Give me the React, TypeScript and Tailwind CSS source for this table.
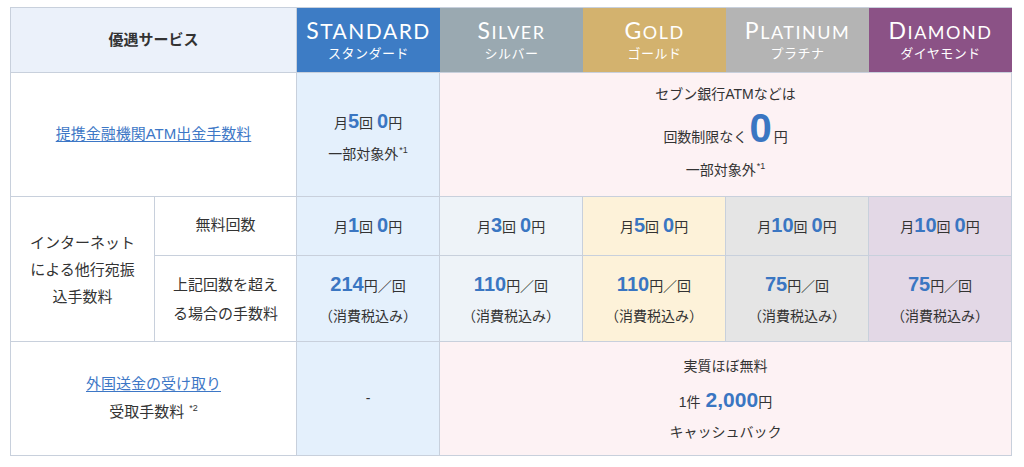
import React from "react";

const JP = { fontFamily: '"Liberation Sans", "Noto Sans CJK JP", sans-serif' };
const LAT = { fontFamily: 'Lato, "Noto Sans CJK JP", sans-serif' };

function Num({ children, big }: { children: React.ReactNode; big?: boolean }) {
  return (
    <span className={`font-bold text-[#3a76c2] ${big ? "text-[40px]" : "text-[20px]"}`}>{children}</span>
  );
}

function Sup({ children }: { children: React.ReactNode }) {
  return <span className="relative -top-[6px] text-[9px] ml-[1px]">{children}</span>;
}

function TierHead({
  bg,
  first,
  rest,
  kana,
  allBig,
}: {
  bg: string;
  first: string;
  rest: string;
  kana: string;
  allBig?: boolean;
}) {
  return (
    <div className={`${bg} border-b border-[#c8d0dc] flex flex-col items-center justify-center text-white`}>
      <div className="leading-none tracking-[1.5px] flex items-baseline -mt-[2px]" style={LAT}>
        <span className="text-[23px]">{first}</span>
        <span className={allBig ? "text-[21px]" : "text-[18px]"}>{rest}</span>
      </div>
      <div className="text-[13px] leading-none mt-[5px] tracking-[0.5px]" style={JP}>
        {kana}
      </div>
    </div>
  );
}

const cell = "border-r border-b border-[#c8d0dc] flex flex-col items-center justify-center text-center";

function FreeCell({ bg, n }: { bg: string; n: string }) {
  return (
    <div className={`${cell} ${bg}`}>
      <div className="text-[14px] leading-[20px] flex items-baseline">
        <span>月</span>
        <Num>{n}</Num>
        <span>回</span>
        <span className="ml-[4px]"></span>
        <Num>0</Num>
        <span className="text-[14px]">円</span>
      </div>
    </div>
  );
}

function FeeCell({ bg, n }: { bg: string; n: string }) {
  return (
    <div className={`${cell} ${bg}`}>
      <div className="text-[14px] leading-[22px] flex items-baseline mt-[2px]">
        <Num>{n}</Num>
        <span>円／回</span>
      </div>
      <div className="text-[14px] leading-[20px] mt-[9px]">（消費税込み）</div>
    </div>
  );
}

export default function App() {
  return (
    <div className="w-[1024px] h-[467px] bg-white text-[#333]" style={JP}>
      <div className="pt-[7px] pl-[10px]">
        <div className="grid grid-cols-[144px_142px_143px_143px_143px_143px_143px] grid-rows-[65px_124px_59px_86px_114px] border-l border-t border-[#c8d0dc] w-max">
          {/* header */}
          <div className={`${cell} col-span-2 bg-[#ebf1fa]`}>
            <span className="text-[15px] font-bold">優遇サービス</span>
          </div>
          <TierHead bg="bg-[#3d7cc5]" first="S" rest="TANDARD" kana="スタンダード" allBig />
          <TierHead bg="bg-[#9aa9b1]" first="S" rest="ILVER" kana="シルバー" />
          <TierHead bg="bg-[#d3b26e]" first="G" rest="OLD" kana="ゴールド" />
          <TierHead bg="bg-[#b4b4b4]" first="P" rest="LATINUM" kana="プラチナ" />
          <TierHead bg="bg-[#8b5286]" first="D" rest="IAMOND" kana="ダイヤモンド" />

          {/* ATM */}
          <div className={`${cell} col-span-2 bg-white`}>
            <a className="text-[15px] text-[#3d77c6] underline underline-offset-2">提携金融機関ATM出金手数料</a>
          </div>
          <div className={`${cell} bg-[#e4f0fc]`}>
            <div className="text-[14px] leading-[22px] flex items-baseline mt-[6px]">
              <span>月</span>
              <Num>5</Num>
              <span>回</span>
              <span className="ml-[4px]"></span>
              <Num>0</Num>
              <span>円</span>
            </div>
            <div className="text-[14px] leading-[20px] mt-[10px]">
              一部対象外<Sup>*1</Sup>
            </div>
          </div>
          <div className={`${cell} col-span-4 bg-[#fdf2f4]`}>
            <div className="text-[14px] leading-[20px] -mt-[3px]">セブン銀行ATMなどは</div>
            <div className="text-[14px] leading-[44px] flex items-baseline mt-[2px]">
              <span>回数制限なく</span>
              <span className="font-bold text-[40px] text-[#3a76c2] leading-[44px] mx-[2px]">0</span>
              <span>円</span>
            </div>
            <div className="text-[14px] leading-[20px] mt-[1px]">
              一部対象外<Sup>*1</Sup>
            </div>
          </div>

          {/* internet */}
          <div className={`${cell} row-span-2 bg-white`}>
            <div className="text-[15px] leading-[27px]">
              インターネット
              <br />
              による他行宛振
              <br />
              込手数料
            </div>
          </div>
          <div className={`${cell} bg-white`}>
            <div className="text-[15px] leading-[20px] -mt-[2px]">無料回数</div>
          </div>
          <FreeCell bg="bg-[#e4f0fc]" n="1" />
          <FreeCell bg="bg-[#eef3f8]" n="3" />
          <FreeCell bg="bg-[#fdf2d9]" n="5" />
          <FreeCell bg="bg-[#e5e5e5]" n="10" />
          <FreeCell bg="bg-[#e3d8e6]" n="10" />

          <div className={`${cell} bg-white`}>
            <div className="text-[15px] leading-[29px]">
              上記回数を超え
              <br />
              る場合の手数料
            </div>
          </div>
          <FeeCell bg="bg-[#e4f0fc]" n="214" />
          <FeeCell bg="bg-[#eef3f8]" n="110" />
          <FeeCell bg="bg-[#fdf2d9]" n="110" />
          <FeeCell bg="bg-[#e5e5e5]" n="75" />
          <FeeCell bg="bg-[#e3d8e6]" n="75" />

          {/* foreign */}
          <div className={`${cell} col-span-2 bg-white`}>
            <a className="text-[15px] leading-[22px] text-[#3d77c6] underline underline-offset-2">外国送金の受け取り</a>
            <div className="text-[15px] leading-[22px] mt-[6px]">
              受取手数料 <Sup>*2</Sup>
            </div>
          </div>
          <div className={`${cell} bg-[#e4f0fc]`}>
            <span className="text-[14px]">-</span>
          </div>
          <div className={`${cell} col-span-4 bg-[#fdf2f4]`}>
            <div className="text-[14px] leading-[20px]">実質ほぼ無料</div>
            <div className="text-[14px] leading-[24px] flex items-baseline mt-[12px]">
              <span>1件</span>
              <span className="ml-[5px] font-bold text-[21px] text-[#3a76c2]">2,000</span>
              <span>円</span>
            </div>
            <div className="text-[14px] leading-[20px] mt-[8px]">キャッシュバック</div>
          </div>
        </div>
      </div>
    </div>
  );
}
